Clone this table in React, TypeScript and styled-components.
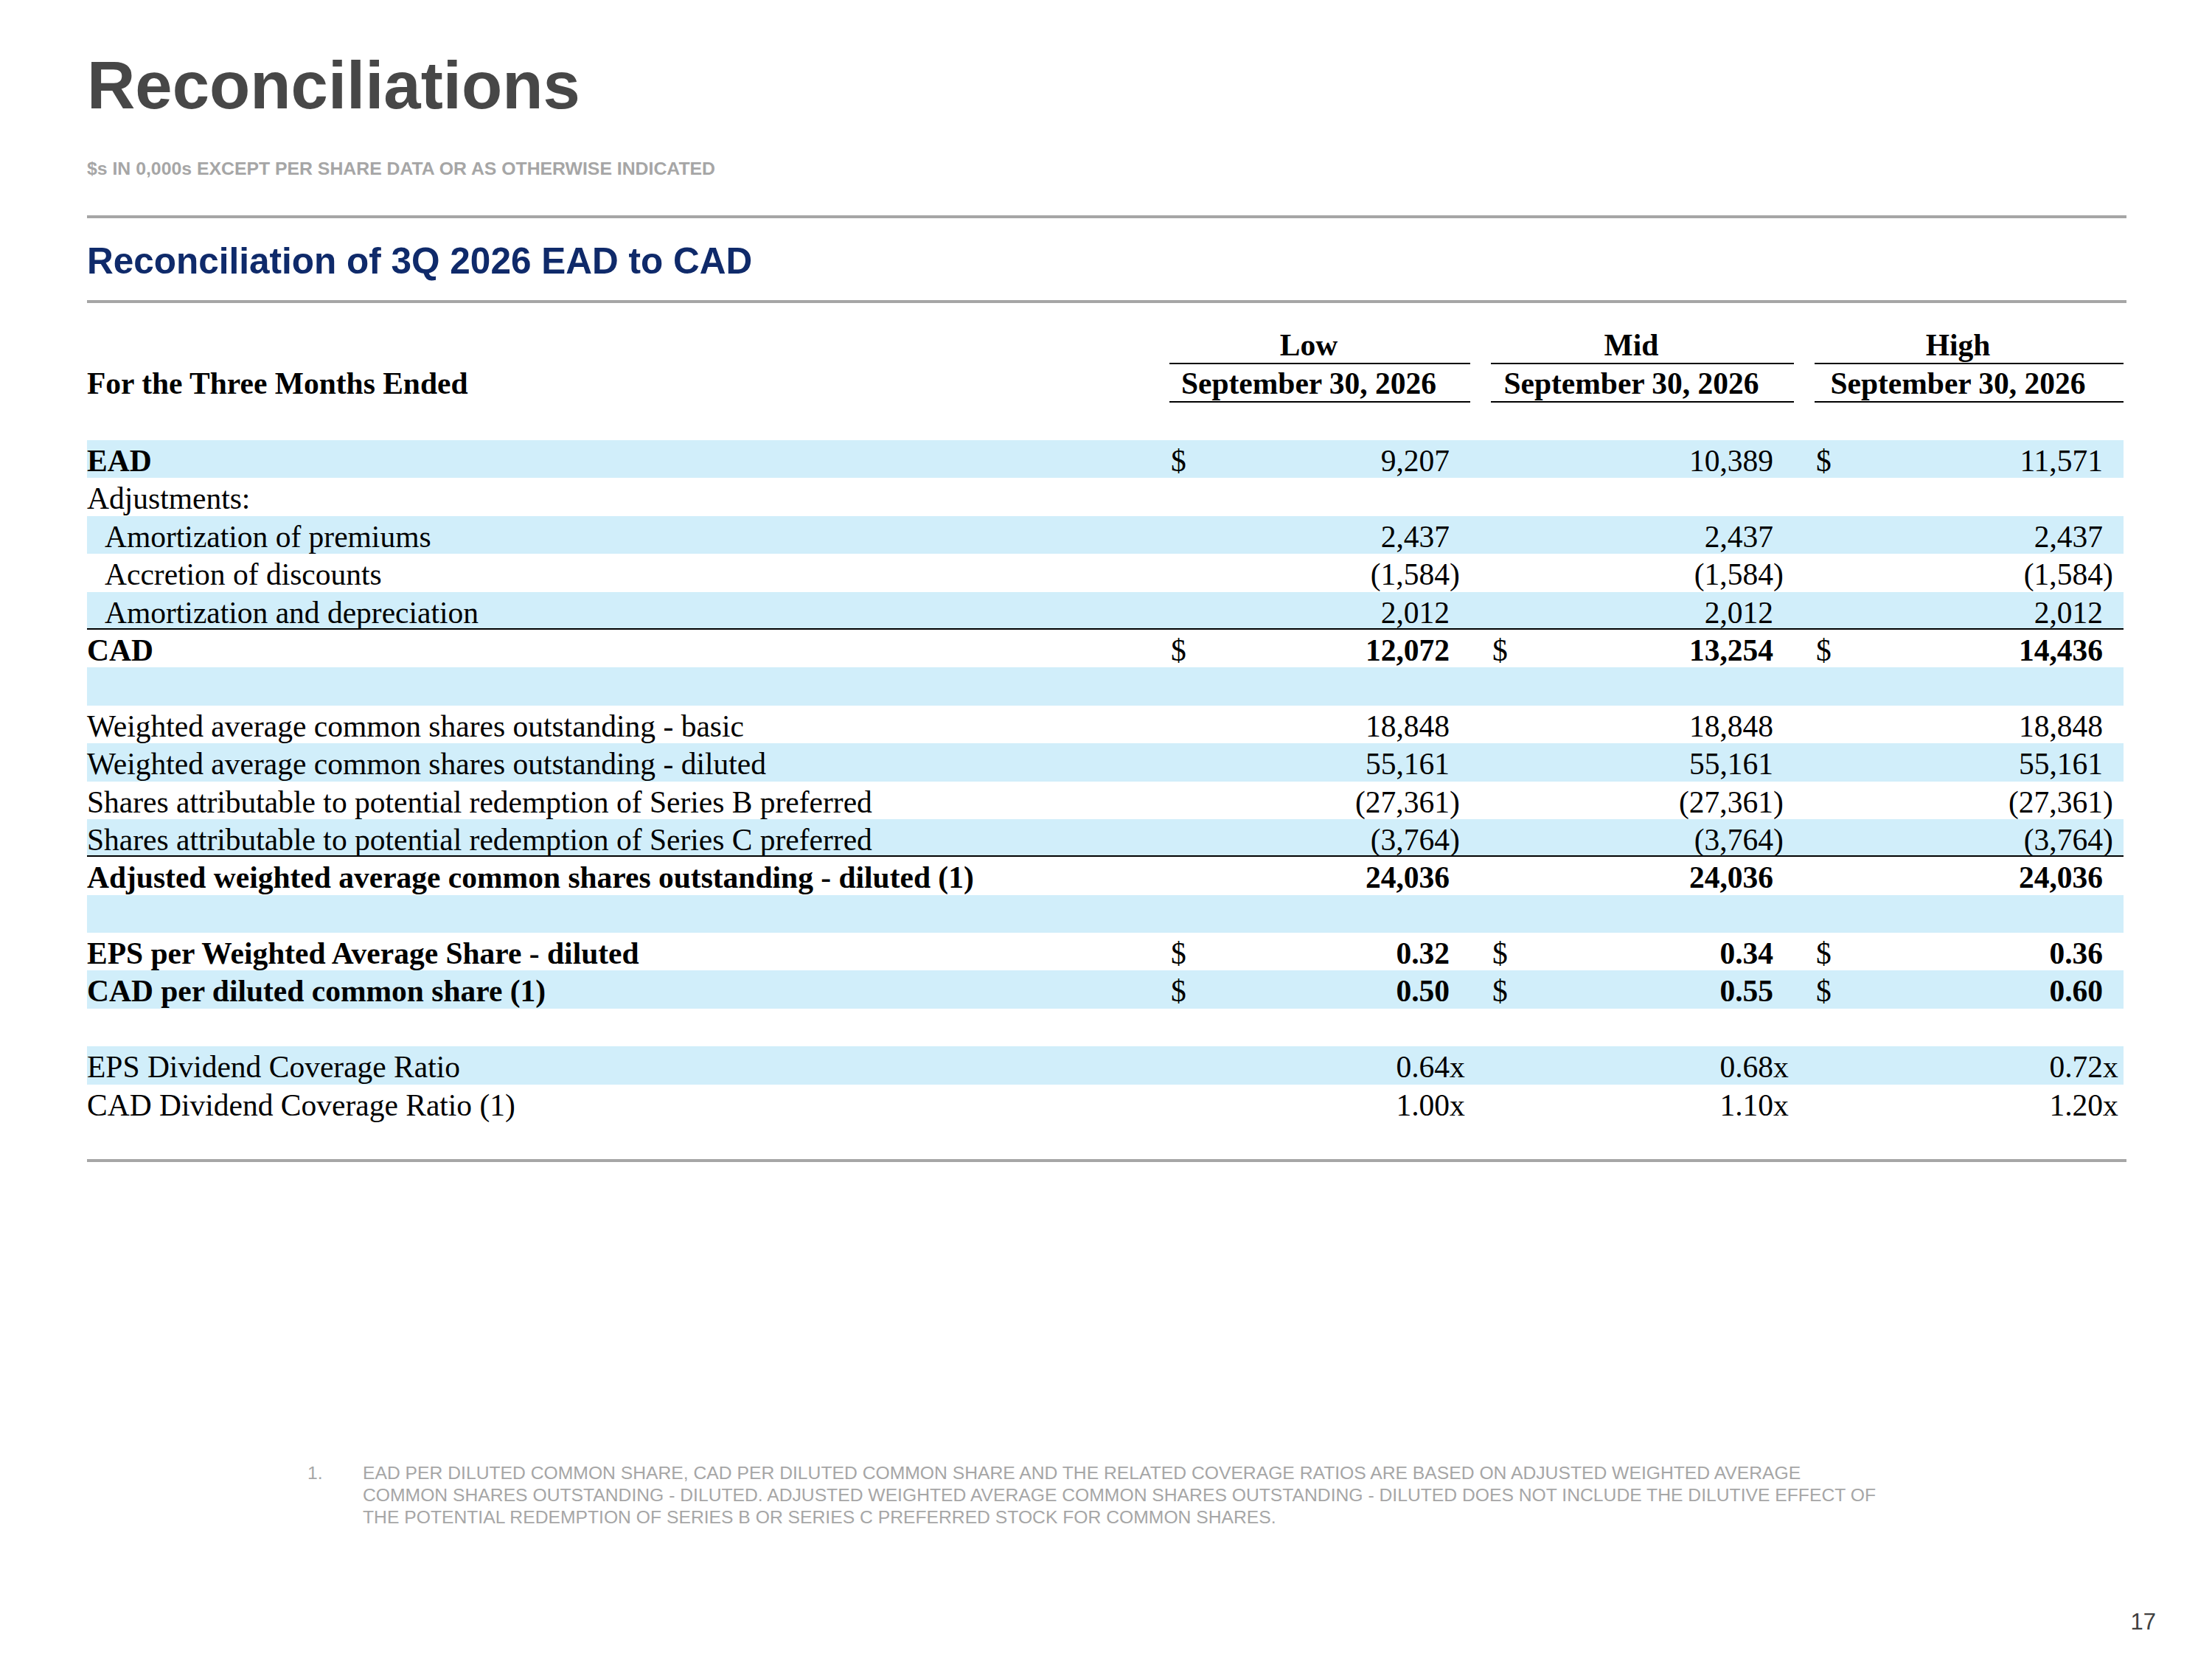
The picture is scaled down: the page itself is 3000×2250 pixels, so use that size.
import styled, { createGlobalStyle } from "styled-components";

const GlobalStyle = createGlobalStyle`
  html, body {
    margin: 0;
    padding: 0;
    background: #ffffff;
  }
  body {
    width: 3000px;
    height: 2250px;
    overflow: hidden;
  }
`;

const Slide = styled.div`
  width: 3000px;
  height: 2250px;
  box-sizing: border-box;
  padding: 71px 76px 37px 118px;
  display: flex;
  flex-direction: column;
  font-family: "Liberation Sans", Arial, sans-serif;
`;

const Title = styled.h1`
  margin: 0;
  font-size: 90.5px;
  line-height: 90px;
  font-weight: 700;
  color: #474747;
`;

const Subtitle = styled.div`
  margin-top: 56px;
  font-size: 24.8px;
  line-height: 23px;
  font-weight: 700;
  color: #a6a6a6;
`;

const Rule = styled.div<{ $gap: number }>`
  margin-top: ${(p) => p.$gap}px;
  width: 2766px;
  height: 4px;
  background: #a6a6a6;
`;

const Heading = styled.h2`
  margin: 35px 0 0;
  font-size: 49.5px;
  line-height: 46px;
  font-weight: 700;
  color: #0f2a6a;
`;

const Table = styled.div`
  margin-top: 31px;
  width: 2762px;
  font-family: "Liberation Serif", "Times New Roman", serif;
  font-size: 41.5px;
  color: #000;
`;

const grid = `
  display: grid;
  grid-template-columns: 1468px 408px 28px 411px 28px 419px;
`;

const HeadRow = styled.div`
  ${grid}
  height: 52px;
  box-sizing: border-box;
  padding-top: 3px;
  line-height: 47px;
  font-weight: 700;
`;

const HeadCell = styled.div`
  text-align: center;
  padding-right: 30px;
  border-bottom: 2px solid #000;
  white-space: nowrap;
`;

const HeadLabel = styled.div`
  white-space: nowrap;
`;

const Spacer = styled.div`
  height: 51px;
`;

const Row = styled.div<{ $shade: boolean; $rule: boolean }>`
  ${grid}
  height: 51.4px;
  box-sizing: border-box;
  padding-top: 5px;
  line-height: 47px;
  background: ${(p) => (p.$shade ? "#d1eefa" : "transparent")};
  border-bottom: ${(p) => (p.$rule ? "2px solid #000" : "none")};
`;

const Label = styled.div<{ $bold: boolean; $indent: boolean }>`
  white-space: nowrap;
  font-weight: ${(p) => (p.$bold ? 700 : 400)};
  padding-left: ${(p) => (p.$indent ? 24 : 0)}px;
`;

const Value = styled.div`
  display: flex;
  justify-content: space-between;
  align-items: baseline;
  padding-left: 2px;
  white-space: nowrap;
`;

const Dollar = styled.span`
  font-weight: 400;
`;

const Amount = styled.span<{ $bold: boolean }>`
  display: flex;
  font-weight: ${(p) => (p.$bold ? 700 : 400)};
`;

const Tail = styled.span`
  width: 28px;
  text-align: left;
  font-weight: 400;
`;

const Footnote = styled.div`
  margin-top: 407px;
  display: flex;
  font-size: 24.7px;
  line-height: 30px;
  color: #a6a6a6;
  padding-left: 299px;
`;

const NoteNum = styled.span`
  width: 75px;
  flex: none;
`;

const NoteText = styled.div`
  white-space: nowrap;
`;

const PageNum = styled.div`
  margin-top: auto;
  align-self: flex-end;
  font-size: 31px;
  line-height: 26px;
  color: #404040;
`;

type Cell = { dollar?: boolean; v: string };
type Line = {
  label: string;
  bold?: boolean;
  indent?: boolean;
  strong?: boolean;
  rule?: boolean;
  cells?: Cell[];
};

const same = (v: string, dollar = false): Cell[] => [
  { v, dollar },
  { v, dollar },
  { v, dollar },
];

const each = (values: string[], dollar = false): Cell[] =>
  values.map((v) => ({ v, dollar }));

const lines: Line[] = [
  {
    label: "EAD",
    bold: true,
    cells: [
      { v: "9,207", dollar: true },
      { v: "10,389" },
      { v: "11,571", dollar: true },
    ],
  },
  { label: "Adjustments:" },
  { label: "Amortization of premiums", indent: true, cells: same("2,437") },
  { label: "Accretion of discounts", indent: true, cells: same("(1,584)") },
  { label: "Amortization and depreciation", indent: true, rule: true, cells: same("2,012") },
  { label: "CAD", bold: true, strong: true, cells: each(["12,072", "13,254", "14,436"], true) },
  { label: "" },
  { label: "Weighted average common shares outstanding - basic", cells: same("18,848") },
  { label: "Weighted average common shares outstanding - diluted", cells: same("55,161") },
  { label: "Shares attributable to potential redemption of Series B preferred", cells: same("(27,361)") },
  { label: "Shares attributable to potential redemption of Series C preferred", rule: true, cells: same("(3,764)") },
  {
    label: "Adjusted weighted average common shares outstanding - diluted (1)",
    bold: true,
    strong: true,
    cells: same("24,036"),
  },
  { label: "" },
  {
    label: "EPS per Weighted Average Share - diluted",
    bold: true,
    strong: true,
    cells: each(["0.32", "0.34", "0.36"], true),
  },
  {
    label: "CAD per diluted common share (1)",
    bold: true,
    strong: true,
    cells: each(["0.50", "0.55", "0.60"], true),
  },
  { label: "" },
  { label: "EPS Dividend Coverage Ratio", cells: each(["0.64x", "0.68x", "0.72x"]) },
  { label: "CAD Dividend Coverage Ratio (1)", cells: each(["1.00x", "1.10x", "1.20x"]) },
];

const columns = ["Low", "Mid", "High"];

// ")" and "x" hang past the right edge of the figures
const splitTail = (v: string) => {
  const last = v.slice(-1);
  if (last === ")" || last === "x") return [v.slice(0, -1), last];
  return [v, ""];
};

const ValueCell = ({ cell, strong }: { cell?: Cell; strong: boolean }) => {
  if (!cell) return <div />;
  const [num, tail] = splitTail(cell.v);
  return (
    <Value>
      <Dollar>{cell.dollar ? "$" : ""}</Dollar>
      <Amount $bold={strong}>
        {num}
        <Tail>{tail}</Tail>
      </Amount>
    </Value>
  );
};

const App = () => {
  return (
    <>
      <GlobalStyle />
      <Slide>
        <Title>Reconciliations</Title>
        <Subtitle>$s IN 0,000s EXCEPT PER SHARE DATA OR AS OTHERWISE INDICATED</Subtitle>
        <Rule $gap={52} />
        <Heading>Reconciliation of 3Q 2026 EAD to CAD</Heading>
        <Rule $gap={30} />

        <Table>
          <HeadRow>
            <HeadLabel />
            <HeadCell>{columns[0]}</HeadCell>
            <div />
            <HeadCell>{columns[1]}</HeadCell>
            <div />
            <HeadCell>{columns[2]}</HeadCell>
          </HeadRow>
          <HeadRow>
            <HeadLabel>For the Three Months Ended</HeadLabel>
            <HeadCell>September 30, 2026</HeadCell>
            <div />
            <HeadCell>September 30, 2026</HeadCell>
            <div />
            <HeadCell>September 30, 2026</HeadCell>
          </HeadRow>
          <Spacer />
          {lines.map((line, i) => (
            <Row key={i} $shade={i % 2 === 0} $rule={!!line.rule}>
              <Label $bold={!!line.bold} $indent={!!line.indent}>
                {line.label}
              </Label>
              <ValueCell cell={line.cells?.[0]} strong={!!line.strong} />
              <div />
              <ValueCell cell={line.cells?.[1]} strong={!!line.strong} />
              <div />
              <ValueCell cell={line.cells?.[2]} strong={!!line.strong} />
            </Row>
          ))}
        </Table>

        <Rule $gap={50} />

        <Footnote>
          <NoteNum>1.</NoteNum>
          <NoteText>
            EAD PER DILUTED COMMON SHARE, CAD PER DILUTED COMMON SHARE AND THE RELATED COVERAGE RATIOS ARE BASED ON ADJUSTED WEIGHTED AVERAGE
            <br />
            COMMON SHARES OUTSTANDING - DILUTED. ADJUSTED WEIGHTED AVERAGE COMMON SHARES OUTSTANDING - DILUTED DOES NOT INCLUDE THE DILUTIVE EFFECT OF
            <br />
            THE POTENTIAL REDEMPTION OF SERIES B OR SERIES C PREFERRED STOCK FOR COMMON SHARES.
          </NoteText>
        </Footnote>

        <PageNum>17</PageNum>
      </Slide>
    </>
  );
};

export default App;
